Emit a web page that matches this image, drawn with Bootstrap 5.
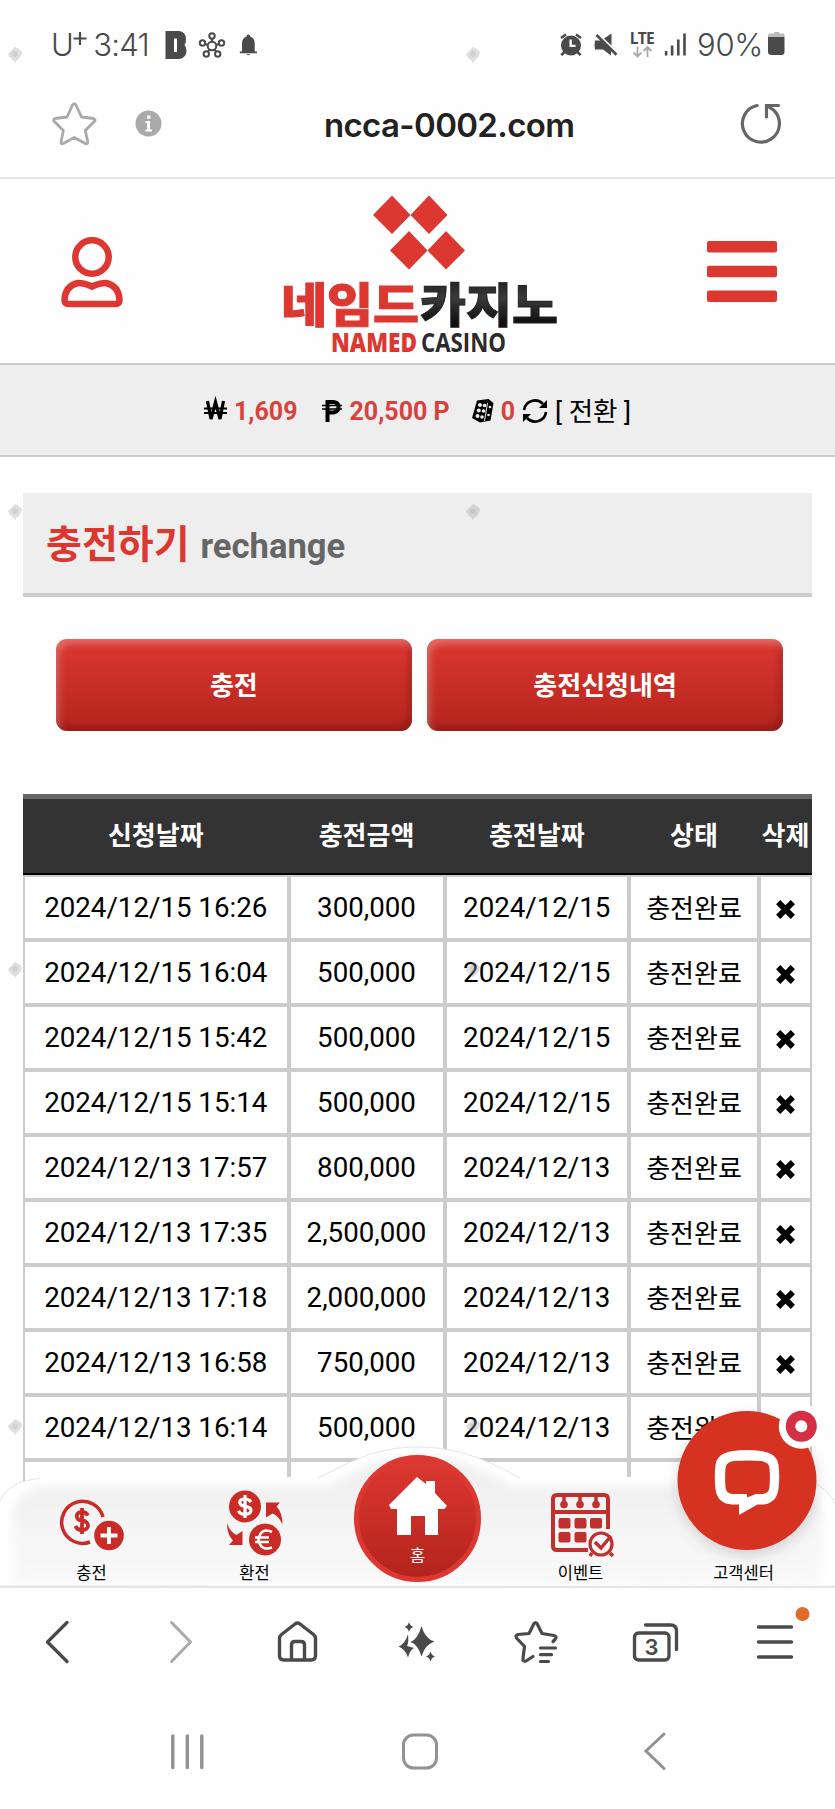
<!DOCTYPE html>
<html lang="ko">
<head>
<meta charset="utf-8">
<meta name="viewport" content="width=device-width, initial-scale=1">
<title>충전하기</title>
<link href="https://cdn.jsdelivr.net/npm/bootstrap@5.3.0/dist/css/bootstrap.min.css" rel="stylesheet">
<style>
:root{--red:#dc3831;--line:#ccc}
body{width:835px;height:1809px;overflow:hidden;background:#fefefe;color:#000;font-family:Roboto,"Noto Sans CJK KR",sans-serif;line-height:1}
svg{display:block;flex:none;overflow:visible}
.ink{color:#4a4a4a}
.status-bar{height:90px;padding-left:51px}
.status-bar .txt{font:300 31px/1 Inter,sans-serif;letter-spacing:-.7px;margin-top:-1px}
.address-bar{height:89px;border-bottom:2px solid #e5e5e5}
.url{width:251px;font:600 33px/1 Inter,"Noto Sans",sans-serif;letter-spacing:-.65px;color:#222}
.site{height:1407px;overflow:hidden}
.site-head{height:186px;border-bottom:2.5px solid var(--line)}
.wallet{height:92px;padding-top:2px;background:#eee;border-bottom:2px solid var(--line);font-size:25px}
.wallet .amount{color:#d8413c;font-weight:700}
.page-title{height:104px;margin:36px 23px 0;padding:4px 0 0 23px;background:#eee;border-bottom:4px solid var(--line)}
.page-title .ko{font-size:39px;font-weight:700;color:var(--red)}
.page-title .en{font-size:34.6px;font-weight:700;color:#666;padding-top:3px}
.actions{margin:42px 52px 0 56px;gap:15.5px}
.btn-red{height:92px;border:0;border-radius:11px;padding-top:8px;color:#fff!important;font-size:26px;font-weight:700;line-height:1;background:linear-gradient(#dc3831,#b3241c);box-shadow:inset 3px 5px 7px rgba(255,255,255,.27),inset -3px -5px 7px rgba(80,0,0,.3)}
.history{width:789px;margin:63px 23px 0;border-collapse:separate;border-spacing:0;table-layout:fixed;text-align:center;font-size:27.7px}
.history th{height:81px;padding:0 0 1px;background:#333;color:#fff;font-size:26px;font-weight:700;border-top:5px solid #666;border-bottom:2px solid #000;white-space:nowrap;text-align:center}
.history td{height:65px;padding:0;border:2px solid var(--line);background:#fff;white-space:nowrap;vertical-align:middle}
.history .state{font-size:26px;padding-top:2px}
.dock{height:108px;padding:0 10px;font-size:16.5px}
.dock-bg{top:-32px;left:0}
.dock a{height:108px;color:#000;text-decoration:none;padding-bottom:4px;z-index:1}
.home-btn{width:127px;height:127px;top:-23px;left:18px;border:5px solid var(--red);background:linear-gradient(#dc3831,#b3241c);color:#fff;padding-top:16px}
.chat{width:163px;height:165px;right:5px;top:1219px;z-index:3}
.browser-nav{height:108px;padding:2px 0 0 38px;border-top:2px solid #e5e5e5}
.stamp{z-index:5;pointer-events:none}
.tabs-num{font:600 22px Inter,sans-serif}
</style>
</head>
<body class="position-relative">
<header class="status-bar d-flex align-items-center ink">
  <span class="txt">U</span><svg width="16" height="30" viewBox="0 0 16 30" stroke="currentColor" stroke-width="2.2"><path d="M7 2v13M.5 8.500h13"/></svg>
  <span class="txt" style="margin-left:4px">3:41</span>
  <svg width="94" height="32" viewBox="164 29 94 32" fill="currentColor" style="margin-left:15px">
    <path fill-rule="evenodd" d="M165.500 31h14q6.500 1.500 6.500 8 0 4-1.500 6 2 2 2 5.500 0 7-7 8.500h-14zM174 38.500v13.500h3v-13.500z"/>
    <g fill="none" stroke="currentColor" stroke-width="2"><circle cx="212" cy="46" r="4.300"/><circle cx="212" cy="36" r="2.700"/><circle cx="202.500" cy="43" r="2.700"/><circle cx="221.500" cy="43" r="2.700"/><circle cx="206.300" cy="54" r="2.700"/><circle cx="217.700" cy="54" r="2.700"/><path d="M212 39v3M205 44l3 1M219 44l-3 1M208 51.500l1.500-2M216 51.500l-1.500-2"/></g>
    <path d="M239.800 51.500h17.200v1.800h-17.200zM242 51.500v-8q0-5.500 4.500-7 0-2 1.800-2t1.800 2q4.600 1.500 4.600 7v8zM246 54.200h4.500q-2.200 2-4.500 0z"/>
  </svg>
  <svg class="ms-auto" width="66" height="32" viewBox="556 29 66 32" fill="currentColor">
    <path fill-rule="evenodd" d="M571 35.500a10 10 0 1 1 0 20 10 10 0 0 1 0-20zM569.500 39.500v7.500h6v-2.200h-3.700v-5.300z"/><path d="M561 38l5-3.500M576 34.500l5 3.500M564.500 52l-3.200 3.200M577.500 52l3.200 3.200" stroke="currentColor" stroke-width="2.600"/>
    <path d="M595 40.500h6l10 10v5l-8-6h-8q-1-4.500 0-9zM604 38.500l7.500-5v12z"/><path d="M596.500 35l20 19.700" stroke="currentColor" stroke-width="2.600"/>
  </svg>
  <svg width="74" height="32" viewBox="628 29 74 32" fill="currentColor" style="margin-left:6px"><text x="629.800" y="43.800" font-family="Open Sans" font-weight="700" font-size="15.500" textLength="25">LTE</text><g fill="none" stroke="#aaa" stroke-width="1.800"><path d="M637.500 46.500v10M633.500 52.500l4 4 4-4M647.500 57v-10M643.500 51l4-4 4 4"/></g><path d="M664.800 51h2.600v4.500h-2.600zM670.800 45.500h2.600v10h-2.600zM677 39.500h2.600v16h-2.600zM683.200 33.500h2.600v22h-2.600z"/></svg>
  <span class="txt" style="margin-left:-5px;letter-spacing:-.3px">90%</span>
  <svg width="18" height="26" viewBox="0 0 18 26" style="margin:-2px 50px 0 4px"><path d="M5 2.500h2V1h5v1.500h4q1.500 0 1.500 2V6H1V4.500q0-2 1.500-2z" fill="#bbb"/><path d="M1 6h16.500v15q0 3-3 3h-10Q1 24 1 21z" fill="currentColor"/></svg>
</header>

<section class="address-bar d-flex align-items-start">
  <svg width="48" height="50" viewBox="50 99 48 50" fill="none" stroke="#aaa" stroke-width="2.800" stroke-linejoin="round" style="margin:9px 0 0 50px"><path d="M72.500 105q1.800-2.500 3.500 0l5.500 12 12 1.500q2.500 1 .8 3l-9 9 2.500 11.500q0 2.500-2.500 1.500l-11-6-11 6q-2.500 1-2.200-1.500l2.200-11.500-9-9q-1.800-2 .8-3l12-1.500z"/></svg>
  <svg width="28" height="28" viewBox="0 0 28 28" style="margin:19px 0 0 37px"><circle cx="13.500" cy="14.500" r="13" fill="#aaa"/><path d="M12 6.500h3.500v3.200H12zM10.500 12H15v8.500h2v2h-6.500v-2H12V14h-1.500z" fill="#fff"/></svg>
  <span class="url text-nowrap" style="margin-left:161px;margin-top:19px">ncca-0002.com</span>
  <svg width="44" height="44" viewBox="738 100 44 44" fill="none" stroke="#666" stroke-width="3.200" stroke-linecap="round" style="margin:10px 53px 0 auto"><path d="M757 105.500a18.500 18.500 0 1 0 16.500 4.500l-6-4M766.500 117v-11.500h12"/></svg>
</section>

<main class="site position-relative">
  <div class="site-head d-flex align-items-start">
    <svg width="66" height="74" viewBox="59 235 66 74" fill="none" stroke="#dc3831" stroke-width="6.500" style="margin:56px 0 0 59px"><circle cx="92" cy="257" r="16.700"/><path d="M78 283q7 0 14 3.500 7-3.500 14-3.500 13 3 13.500 17 0 4-4 4h-47q-4 0-4-4 .5-14 13.500-17z"/></svg>
    <svg width="290" height="170" viewBox="275 190 290 170" style="margin:11px 0 0 150px">
      <defs><linearGradient id="steel" x2="0" y2="1"><stop stop-color="#111"/><stop offset=".45" stop-color="#3a3a3a"/><stop offset=".8" stop-color="#111"/></linearGradient></defs>
      <path fill="#dc3831" d="M373 215l19-19.500L410.500 215l18.500-19.500L447.500 215 429 234l-18.500-19L392 234zM390 250.500l19-19.500 18.500 19.500L446 231l19 19.500-19 19-18.500-19-18.500 19z"/>
      <g font-family="Noto Sans CJK KR" font-weight="900" stroke-width=".9"><text x="281" y="322" font-size="46.500" fill="#dc3831" stroke="#dc3831" textLength="138" lengthAdjust="spacingAndGlyphs">네임드</text><text x="420" y="322" font-size="46.500" fill="url(#steel)" stroke="#222" textLength="138" lengthAdjust="spacingAndGlyphs">카지노</text></g>
      <g font-family="Open Sans" font-weight="800" font-size="26"><text x="331" y="351.500" fill="#dc3831" textLength="86" lengthAdjust="spacingAndGlyphs">NAMED</text><text x="421" y="351.500" fill="#2b2b2b" font-weight="700" textLength="85" lengthAdjust="spacingAndGlyphs">CASINO</text></g>
    </svg>
    <svg width="70" height="62" viewBox="0 0 70 62" fill="#dc3831" style="margin:62px 0 0 142px"><rect width="70" height="11.500" rx="2"/><rect y="24.700" width="70" height="11.500" rx="2"/><rect y="49.500" width="70" height="11.500" rx="2"/></svg>
  </div>

  <div class="wallet d-flex align-items-center">
    <svg width="23" height="20" viewBox="0 0 23 20" fill="none" stroke="#000" style="margin-left:204px"><path d="M3.500 0l3.500 18 4.500-17 4.500 17 3.500-18" stroke-width="3.200"/><path d="M0 7.500h23M0 12h23" stroke-width="1.800"/></svg>
    <span class="amount" style="margin-left:7px">1,609</span>
    <svg width="20" height="22" viewBox="0 0 20 22" fill="none" stroke="#000" style="margin-left:24px"><path d="M5.500 22V2h6q5 .5 5 5t-5 5.500h-6" stroke-width="4"/><path d="M0 5.500h20M0 9h20" stroke-width="1.600"/></svg>
    <span class="amount" style="margin-left:8px">20,500 P</span>
    <svg width="23" height="24" viewBox="0 0 23 24" style="margin-left:21px"><path d="M6 1.500L17.500 0l5 4-3 17.500-10.500 2L1 19z"/><path d="M16.500 4l-3 18" stroke="#eee" stroke-width="1" fill="none"/><g fill="#eee"><circle cx="9" cy="6" r="2"/><circle cx="7.800" cy="11.500" r="2"/><circle cx="6.500" cy="17" r="2"/><circle cx="13.500" cy="6.500" r="1.800"/><circle cx="12.500" cy="12" r="1.800"/><circle cx="11" cy="18" r="1.800"/><circle cx="19" cy="8" r="1.300"/><circle cx="17.500" cy="16" r="1.300"/></g></svg>
    <span class="amount" style="margin-left:7px">0</span>
    <svg width="26" height="26" viewBox="0 0 26 26" fill="none" stroke="#000" stroke-width="2.600" style="margin-left:7px"><path d="M2 12A11 11 0 0 1 21 6M24 14A11 11 0 0 1 5 20"/><path d="M25 2v8h-8zM1 24v-8h8z" fill="#000" stroke="none"/></svg>
    <span style="margin-left:7px;padding-top:2px;font-size:26.500px">[ 전환 ]</span>
  </div>

  <h1 class="page-title d-flex align-items-center mb-0"><span class="ko">충전하기</span><small class="en" style="margin-left:11px">rechange</small></h1>

  <div class="actions d-flex">
    <button class="btn btn-red flex-fill w-50">충전</button>
    <button class="btn btn-red flex-fill w-50">충전신청내역</button>
  </div>

  <table class="history">
    <colgroup><col style="width:265.500px"><col style="width:156px"><col style="width:184.500px"><col style="width:130px"><col style="width:53px"></colgroup>
    <thead><tr><th>신청날짜</th><th>충전금액</th><th>충전날짜</th><th>상태</th><th>삭제</th></tr></thead>
    <tbody id="rows"></tbody>
  </table>

  <nav class="dock position-absolute bottom-0 start-0 w-100 d-flex">
    <svg class="dock-bg position-absolute" width="835" height="140" viewBox="0 1446 835 140">
      <defs><linearGradient id="fade" x2="0" y2="1"><stop stop-color="#eee"/><stop offset="1" stop-color="#fafafa"/></linearGradient><filter id="soft"><feGaussianBlur stdDeviation="5"/></filter></defs>
      <path d="M-1 1586V1503Q8 1478 50 1478H318C350 1462 375 1447 418 1447S490 1462 520 1478H795Q823 1480 836 1505V1586z" fill="#fff" stroke="#ddd" stroke-width=".8"/>
      <path d="M40 1478H318M520 1478H800" stroke="#fff" stroke-width="2"/>
      <path d="M12 1586V1515Q16 1486 52 1486H328C360 1470 375 1457 418 1457S480 1470 512 1486H790Q818 1490 822 1515V1590z" fill="url(#fade)" filter="url(#soft)"/>
    </svg>
    <a href="#" class="flex-fill w-100 d-flex flex-column align-items-center justify-content-end position-relative">
      <svg width="66" height="54" viewBox="59 1495 66 54" fill="none" stroke="#c92b26" style="margin:0 0 15px"><path d="M103 1515a21 21 0 1 0-13 25" stroke-width="3.500"/><path d="M88 1513.500q-2-3.500-6-3.500c-7 0-7 7.500 0 8.500 8 1 8 9.500 0 9.500q-5 0-6.500-4M82 1506v26" stroke-width="3.800"/><circle cx="109" cy="1533.500" r="14.800" fill="#c92b26" stroke="none"/><path d="M109 1525v17M100.500 1533.500h17" stroke="#fff" stroke-width="3.800"/></svg>충전</a>
    <a href="#" class="flex-fill w-100 d-flex flex-column align-items-center justify-content-end position-relative">
      <svg width="58" height="66" viewBox="226 1490 58 66" style="margin:0 0 10px"><g fill="#c92b26"><circle cx="245" cy="1506.500" r="16"/><circle cx="265" cy="1539.500" r="16"/><path d="M266 1502.500h14l-3.500 4q6 6 6 18-4-9-10-11l-6.500 4zM227 1523q3 9 9.500 12l6-4v14h-13.500l4-4.500q-6-6-6-17.500z"/></g><g fill="none" stroke="#fff" stroke-width="3.200"><path d="M251 1502q-2-3-6-3c-7 0-7 6.500 0 7.300 8 .8 8 8 0 8q-5 0-6.500-3.500M245 1495v23"/><path d="M272 1532q-11-5-13.500 7.500 2 12 13.500 8M255 1537.500h14M255 1542h14" stroke-width="2.600"/></g></svg>환전</a>
    <a href="#" class="flex-fill w-100 position-relative"><span class="home-btn position-absolute rounded-circle d-flex flex-column align-items-center">
      <svg width="58" height="60" viewBox="390 1476 58 60" fill="#fff" style="margin-bottom:13px"><path d="M418 1477l9 7v-3h9v12l12 13-3 3h-6v26h-13v-19h-14v19h-14v-26h-6l-2-4z"/></svg>홈</span></a>
    <a href="#" class="flex-fill w-100 d-flex flex-column align-items-center justify-content-end position-relative">
      <svg width="66" height="66" viewBox="550 1492 66 66" fill="none" stroke="#c0302f" style="margin:0 0 8px 5px"><path d="M588 1550h-31q-4 0-4-4v-47q0-4 4-4h47q4 0 4 4v30M553 1512h55" stroke-width="4"/><path d="M564 1496v8M580 1496v8M596 1496v8" stroke-width="3.500"/><g fill="#c0302f" stroke="none"><circle cx="564" cy="1504.500" r="3.800"/><circle cx="580" cy="1504.500" r="3.800"/><circle cx="596" cy="1504.500" r="3.800"/><rect x="558.500" y="1518" width="12" height="10.500" rx="2"/><rect x="574.500" y="1518" width="12" height="10.500" rx="2"/><rect x="590" y="1518" width="12" height="10.500" rx="2"/><rect x="558.500" y="1532" width="12" height="10.500" rx="2"/><rect x="574.500" y="1532" width="12" height="10.500" rx="2"/></g><circle cx="601" cy="1544" r="11" stroke-width="3.200" fill="#f7f7f7"/><path d="M595 1542l6 6 10-12M592 1553l-2 3M610 1553l3 3" stroke-width="3.400"/></svg>이벤트</a>
    <a href="#" class="flex-fill w-100 d-flex flex-column align-items-center justify-content-end position-relative">고객센터</a>
  </nav>

  <svg class="chat position-absolute" width="163" height="165" viewBox="667 1398 163 165"><defs><filter id="drop" x="-20%" y="-20%" width="140%" height="150%"><feDropShadow dx="0" dy="5" stdDeviation="7" flood-opacity=".15"/></filter></defs><circle cx="747" cy="1480.500" r="69.500" fill="#d63023" filter="url(#drop)"/><path fill="#fff" fill-rule="evenodd" d="M733 1451q14-2 28 0 16 2 17.500 14 1.500 12 0 24-2 14-15 15.500h-6l-18.500 10.500v-10.500h-7q-15-1-16.500-15.500-1.500-12 0-24 1.500-12 17.500-14zM734 1461q-8 1-8.500 7-.8 10 0 19 .5 7 7.500 7h14v3.500l9-3.500h6q7 0 7.500-7 .8-9 0-19-.5-6-8.500-7-13-1-27 0z"/><circle cx="801.300" cy="1426.300" r="22.500" fill="#fff"/><circle cx="801.300" cy="1426.300" r="15.500" fill="#d52f45"/><circle cx="801.300" cy="1426.300" r="6" fill="#fff"/></svg>
</main>

<nav class="browser-nav d-flex align-items-center ink">
  <svg width="40" height="46" viewBox="38 1619 40 46" fill="none" stroke="currentColor" stroke-width="3.300" stroke-linecap="round" stroke-linejoin="round"><path d="M67 1622.500l-19.500 19.500 19.500 19.500"/></svg>
  <svg width="40" height="46" viewBox="160 1619 40 46" fill="none" stroke="#aaa" stroke-width="3" stroke-linecap="round" stroke-linejoin="round" style="margin-left:82px"><path d="M171.500 1622.500l19 19.500-19 19.500"/></svg>
  <svg width="46" height="46" viewBox="275 1619 46 46" fill="none" stroke="currentColor" stroke-width="3.400" stroke-linejoin="round" style="margin-left:75px"><path d="M295 1624q2.500-2 5 0l13.500 10.500q2 1.500 2 4v17q0 4.500-4.500 4.500h-27q-4.500 0-4.500-4.500v-17q0-2.500 2-4zM291.500 1660v-15q0-3.500 3.500-3.500h6q3.500 0 3.500 3.500v15"/></svg>
  <svg width="46" height="46" viewBox="394 1619 46 46" fill="currentColor" style="margin-left:73px"><path d="M421.500 1626q3.500 13 13 15.500-9 2.500-13 15-3.500-12-11-14.500 7.500-3 11-16zM408 1634q1 8-1 12l7 2q-4 2-6 9.500-2.500-8-9.500-11 7-3 9.500-12.500zM409 1622q1 4 4.500 5-3.500 1-4.500 5-1-4-4.500-5 3.500-1 4.500-5zM430.500 1651.500q1 4 4.500 5-3.500 1-4.500 5-1-4-4.500-5 3.500-1 4.500-5z"/></svg>
  <svg width="48" height="46" viewBox="512 1619 48 46" fill="none" stroke="currentColor" stroke-width="3.200" stroke-linecap="round" stroke-linejoin="round" style="margin-left:72px"><path d="M533 1656.500l-7 4.500q-3.500 1-3-2.500l1.500-12-8-8.500q-1.500-3 1.500-3.500l11-1 5-10q1.500-2 3 0l5 10 12 2q3.500 1 1 4l-2 2M540.500 1648h15M540.500 1654.700h11M540.500 1661.500h8"/></svg>
  <svg width="48" height="46" viewBox="631 1619 48 46" fill="none" stroke="currentColor" stroke-width="3.300" stroke-linecap="round" style="margin-left:71px"><rect x="634.500" y="1633" width="34.500" height="27" rx="4"/><path d="M645.500 1625h25q6 0 6 6v18.500"/><text class="tabs-num" x="644.500" y="1654.500" fill="currentColor" stroke="none">3</text></svg>
  <svg width="56" height="60" viewBox="754 1605 56 60" fill="none" stroke="currentColor" stroke-width="3.400" stroke-linecap="round" style="margin:-14px 0 0 75px"><path d="M758.500 1627h33M758.500 1642h33M758.500 1657h33"/><circle cx="802.500" cy="1614" r="7" fill="#df6a2d" stroke="none"/></svg>
</nav>

<footer class="d-flex align-items-center" style="height:115px">
  <svg width="34" height="38" viewBox="0 0 34 38" stroke="#929292" stroke-width="3.500" stroke-linecap="round" style="margin-left:171px"><path d="M1.800 3v31.500M16.300 3v31.500M30.800 3v31.500"/></svg>
  <svg width="38" height="38" viewBox="0 0 38 38" fill="none" stroke="#929292" stroke-width="3" style="margin-left:196px"><rect x="2.500" y="2" width="33" height="33" rx="10"/></svg>
  <svg width="24" height="40" viewBox="0 0 24 40" fill="none" stroke="#929292" stroke-width="3" stroke-linecap="round" style="margin-left:205px"><path d="M20 2L2 19l18 17.500"/></svg>
</footer>

<div id="stamps"></div>
<script>
const charges=[["2024/12/15 16:26","300,000"],["2024/12/15 16:04","500,000"],["2024/12/15 15:42","500,000"],["2024/12/15 15:14","500,000"],["2024/12/13 17:57","800,000"],["2024/12/13 17:35","2,500,000"],["2024/12/13 17:18","2,000,000"],["2024/12/13 16:58","750,000"],["2024/12/13 16:14","500,000"]];
const cross='<svg class="mx-auto mt-1" width="21" height="21" viewBox="0 0 20 20"><path d="M3 3l14 14M17 3L3 17" stroke="#000" stroke-width="5.600"/></svg>';
document.getElementById("rows").innerHTML=charges.map(([d,a])=>`<tr><td>${d}</td><td>${a}</td><td>${d.slice(0,10)}</td><td class="state">충전완료</td><td>${cross}</td></tr>`).join("")+"<tr>"+"<td></td>".repeat(5)+"</tr>";
// faint diamond stamps scattered over the screen
document.getElementById("stamps").innerHTML=[54,511,969,1426].flatMap(y=>[15,473].map(x=>`<svg class="stamp position-absolute" width="20" height="22" viewBox="-10 -10 20 22" style="left:${x-10}px;top:${y-10}px"><path d="M0-7q7 3 7 6-2 6-6 8l-1 3-1-3q-5-3-6-7z" fill="#999" opacity=".3"/><circle r="3" fill="#999" opacity=".2"/></svg>`)).join("");
</script>
<script src="https://cdn.jsdelivr.net/npm/bootstrap@5.3.0/dist/js/bootstrap.bundle.min.js"></script>
</body>
</html>
